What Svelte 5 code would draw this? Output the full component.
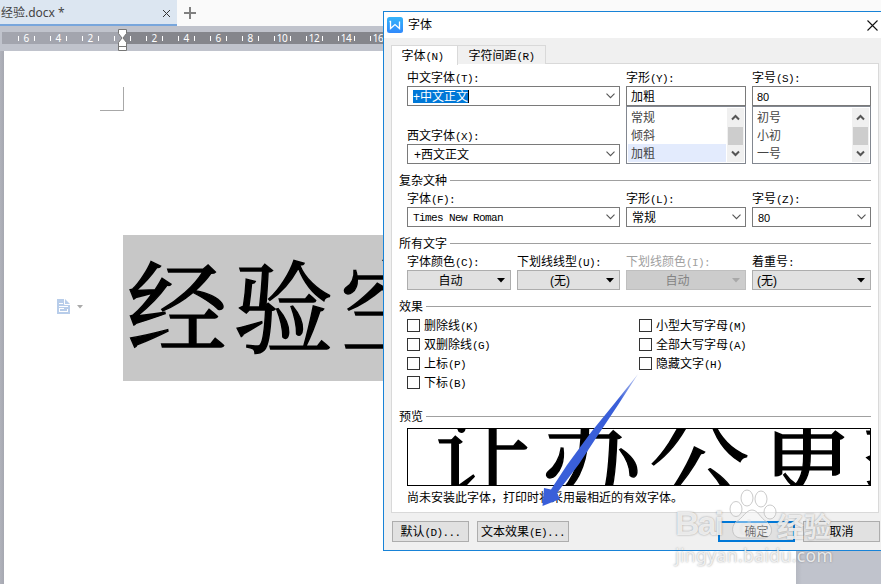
<script lang="ts">
    const rulerMarks = ["6", "4", "2", "", "2", "4", "6", "8", "10", "12", "14", "16"];
    const fontStyles = ["常规", "倾斜", "加粗"];
    const fontSizes = ["初号", "小初", "一号"];
    const leftEffects = [
        { text: "删除线", key: "(K)" },
        { text: "双删除线", key: "(G)" },
        { text: "上标", key: "(P)" },
        { text: "下标", key: "(B)" },
    ];
    const rightEffects = [
        { text: "小型大写字母", key: "(M)" },
        { text: "全部大写字母", key: "(A)" },
        { text: "隐藏文字", key: "(H)" },
    ];

    let selectedStyle = $state("加粗");
    let activeTab = $state("font");
</script>

{#snippet label(text: string, key: string)}
    <div class="label">{text}<span class="key">{key}</span></div>
{/snippet}

{#snippet chevron()}
    <svg class="chevron" width="9" height="6" viewBox="0 0 9 6">
        <path d="M0.5 0.7L4.5 4.7L8.5 0.7" fill="none" stroke="#555" stroke-width="1.1" />
    </svg>
{/snippet}

{#snippet heading(text: string)}
    <div class="heading"><span>{text}</span><i></i></div>
{/snippet}

{#snippet triangle()}
    <svg class="triangle" width="8" height="5" viewBox="0 0 8 5">
        <path d="M0 0H8L4 4.5Z" fill="currentColor" />
    </svg>
{/snippet}

{#snippet listbox(items: string[], current: string)}
    <div class="listbox">
        <div class="items">
            {#each items as item}
                <div class="item" class:selected={item === current}>{item}</div>
            {/each}
        </div>
        <div class="scrollbar">
            <svg width="9" height="7" viewBox="0 0 9 7">
                <path d="M1 5.5L4.5 2L8 5.5" fill="none" stroke="#555" stroke-width="2" />
            </svg>
            <div class="thumb"></div>
            <svg width="9" height="7" viewBox="0 0 9 7">
                <path d="M1 1.5L4.5 5L8 1.5" fill="none" stroke="#555" stroke-width="2" />
            </svg>
        </div>
    </div>
{/snippet}

{#snippet checkbox(text: string, key: string)}
    <div class="check"><span class="box"></span><span class="caption">{text}<span class="key">{key}</span></span></div>
{/snippet}

<div class="app">
    <div class="tabbar">
        <div class="doc-tab">
            <span>经验.docx *</span>
            <svg width="9" height="9" viewBox="0 0 9 9">
                <path d="M1 1L8 8M8 1L1 8" stroke="#333" stroke-width="1" />
            </svg>
        </div>
        <svg class="plus" width="12" height="12" viewBox="0 0 12 12">
            <path d="M6 0V12M0 6H12" stroke="#808080" stroke-width="2" />
        </svg>
    </div>
    <div class="ruler">
        <div class="scale">
            {#each rulerMarks as mark}
                <div class="mark"><i></i><span>{mark}</span><i></i></div>
            {/each}
        </div>
        <svg class="indent" width="9" height="22" viewBox="0 0 9 22">
            <path d="M0.5 0.5H8.5V4.5L5 9L8.5 13.5V21.5H0.5V13.5L4 9L0.5 4.5Z" fill="#fff" stroke="#777" />
            <path d="M0.5 17.5H8.5" stroke="#777" />
        </svg>
    </div>
    <div class="workspace">
        <div class="page">
            <div class="corner"></div>
            <div class="line">
                <div class="paste">
                    <svg width="13" height="15" viewBox="0 0 13 15">
                        <path d="M0 0H8L13 5V15H0Z" fill="#b8cdea" />
                        <path d="M7.5 0V5.5H13M2 4.5H6M2 7.5H11M2 9.5H7M2 12.5H11M10.5 10V13M2.5 10V13" fill="none" stroke="#fff" />
                    </svg>
                    <svg width="6" height="4" viewBox="0 0 6 4">
                        <path d="M0 0H6L3 3.5Z" fill="#aaa" />
                    </svg>
                </div>
                <div class="selection">经验空</div>
            </div>
        </div>
    </div>

    <div class="dialog">
        <div class="title">
            <svg width="16" height="16" viewBox="0 0 16 16">
                <defs>
                    <linearGradient id="logo" x1="0" y1="0" x2="0" y2="1">
                        <stop offset="0" stop-color="#35b4fa" />
                        <stop offset="1" stop-color="#3089fc" />
                    </linearGradient>
                </defs>
                <rect width="16" height="16" rx="2.5" fill="url(#logo)" />
                <path d="M2.5 4.5H3.5V11.5L8 7.5L12.5 11.5V4.5" fill="none" stroke="#fff" stroke-width="1.3" />
            </svg>
            <span>字体</span>
            <svg class="close" width="11" height="11" viewBox="0 0 11 11">
                <path d="M0.5 0.5L10.5 10.5M10.5 0.5L0.5 10.5" stroke="#111" stroke-width="1.1" />
            </svg>
        </div>

        <div class="tabs">
            <button class="tab" class:active={activeTab === "font"} onclick={() => (activeTab = "font")}>
                字体<span class="key">(N)</span>
            </button>
            <button class="tab" class:active={activeTab === "spacing"} onclick={() => (activeTab = "spacing")}>
                字符间距<span class="key">(R)</span>
            </button>
        </div>

        <div class="panel">
            <div class="fields top">
                <div class="stack">
                    <div>
                        {@render label("中文字体", "(T):")}
                        <div class="combo"><span class="marked">+中文正文</span>{@render chevron()}</div>
                    </div>
                    <div>
                        {@render label("西文字体", "(X):")}
                        <div class="combo"><span class="plain">+西文正文</span>{@render chevron()}</div>
                    </div>
                </div>
                <div>
                    {@render label("字形", "(Y):")}
                    <div class="combo input"><span>加粗</span></div>
                    {@render listbox(fontStyles, selectedStyle)}
                </div>
                <div>
                    {@render label("字号", "(S):")}
                    <div class="combo input"><span class="num">80</span></div>
                    {@render listbox(fontSizes, "")}
                </div>
            </div>

            {@render heading("复杂文种")}
            <div class="fields">
                <div>
                    {@render label("字体", "(F):")}
                    <div class="combo"><span class="roman">Times New Roman</span>{@render chevron()}</div>
                </div>
                <div>
                    {@render label("字形", "(L):")}
                    <div class="combo"><span>常规</span>{@render chevron()}</div>
                </div>
                <div>
                    {@render label("字号", "(Z):")}
                    <div class="combo"><span class="num">80</span>{@render chevron()}</div>
                </div>
            </div>

            {@render heading("所有文字")}
            <div class="fields four">
                <div>
                    {@render label("字体颜色", "(C):")}
                    <button class="drop"><span>自动</span>{@render triangle()}</button>
                </div>
                <div>
                    {@render label("下划线线型", "(U):")}
                    <button class="drop"><span>(无)</span>{@render triangle()}</button>
                </div>
                <div class="disabled">
                    {@render label("下划线颜色", "(I):")}
                    <button class="drop" disabled><span>自动</span>{@render triangle()}</button>
                </div>
                <div>
                    {@render label("着重号", ":")}
                    <button class="drop start"><span>(无)</span>{@render triangle()}</button>
                </div>
            </div>

            {@render heading("效果")}
            <div class="effects">
                <div>
                    {#each leftEffects as effect}
                        {@render checkbox(effect.text, effect.key)}
                    {/each}
                </div>
                <div>
                    {#each rightEffects as effect}
                        {@render checkbox(effect.text, effect.key)}
                    {/each}
                </div>
            </div>

            {@render heading("预览")}
            <div class="preview"><span>让办公更轻</span></div>
            <div class="note">尚未安装此字体，打印时将采用最相近的有效字体。</div>
        </div>

        <div class="footer">
            <button class="btn">默认<span class="key">(D)...</span></button>
            <button class="btn effect">文本效果<span class="key">(E)...</span></button>
            <button class="btn ok">确定</button>
            <button class="btn">取消</button>
        </div>
    </div>

    <svg class="arrow" width="100" height="136" viewBox="540 372 100 136">
        <defs>
            <linearGradient id="shaft" x1="0" y1="1" x2="1" y2="0">
                <stop offset="0.8" stop-color="#3a5fd9" />
                <stop offset="1" stop-color="#3a5fd9" stop-opacity="0.3" />
            </linearGradient>
        </defs>
        <path d="M542.5 506L544 488L551 489.5L567 465L592 431L614 404L638 374L618 405L598 435L579 464L557 493L560 499Z" fill="url(#shaft)" />
    </svg>

    <div class="watermark">
        <div class="brand">
            <span class="bai">Bai</span>
            <svg width="50" height="54" viewBox="0 0 50 54">
                <g fill="#fff" fill-opacity="0.4" stroke="#bdbdbd" stroke-opacity="0.8">
                    <ellipse cx="9" cy="21" rx="6" ry="7.5" />
                    <ellipse cx="20" cy="10" rx="6" ry="8" />
                    <ellipse cx="34" cy="11" rx="6" ry="8" />
                    <ellipse cx="43" cy="24" rx="6" ry="7" />
                    <path d="M25 22C19 22 16 30 9 34C3 39 5 50 14 50H36C46 50 47 39 40 34C33 30 31 22 25 22Z" />
                </g>
                <text x="25" y="47" text-anchor="middle">du</text>
            </svg>
            <span class="jy">经验</span>
        </div>
        <div class="url">jingyan.baidu.com</div>
    </div>
</div>

<style>
    :global(body) {
        margin: 0;
    }

    .app {
        position: relative;
        width: 881px;
        height: 584px;
        overflow: hidden;
        display: flex;
        flex-direction: column;
        background: #c0c3cc;
        font: 12px/16px "Liberation Sans", "Noto Sans CJK SC", sans-serif;
        color: #000;
    }

    .app *,
    .app {
        box-sizing: border-box;
    }

    svg {
        display: block;
        flex: none;
    }

    button {
        font: inherit;
        color: inherit;
        padding: 0;
        margin: 0;
        border-radius: 0;
    }

    /* half the width of a 12px ideograph per letter */
    .key {
        font-family: "Liberation Mono", monospace;
        font-size: 11px;
        line-height: 12px;
        letter-spacing: -0.6px;
    }

    /* document window */
    .tabbar {
        height: 26px;
        display: flex;
        align-items: center;
        background: #fafafa;
    }

    .doc-tab {
        width: 177px;
        height: 26px;
        padding: 2px 6px 0 1px;
        display: flex;
        align-items: center;
        justify-content: space-between;
        background: #dce6f1;
        border-bottom: 2px solid #78a6dc;
        font-family: "Noto Sans", "Noto Sans CJK SC", sans-serif;
        color: #444;
    }

    .plus {
        margin-left: 7px;
    }

    .ruler {
        position: relative;
        height: 25px;
        padding: 6px 0 0 2px;
    }

    .scale {
        height: 12px;
        padding-left: 8px;
        display: flex;
        background: linear-gradient(to right, #a3a5ae 121px, #85868c 121px);
    }

    .mark {
        width: 32px;
        flex: none;
        display: flex;
        align-items: center;
        justify-content: center;
        font: 10px/12px "Noto Sans", sans-serif;
        letter-spacing: -0.5px;
        color: #fff;
    }

    .mark i {
        width: 1px;
        height: 5px;
        background: #fff;
    }

    .mark span {
        width: 15px;
        display: flex;
        justify-content: center;
    }

    .indent {
        position: absolute;
        left: 118px;
        top: 3px;
    }

    .workspace {
        flex: 1;
        padding-left: 4px;
        background: linear-gradient(to right, #b0b2bb, #a6a8b1 4px, #b5b8c1 796px, #c0c3cc 802px);
    }

    .page {
        width: 792px;
        height: 533px;
        padding-top: 36px;
        background: #fff;
    }

    .corner {
        width: 24px;
        height: 24px;
        margin-left: 96px;
        border: solid #a8a8a8;
        border-width: 0 1px 1px 0;
    }

    .line {
        display: flex;
        align-items: center;
        margin-top: 124px;
        padding-left: 53px;
    }

    .paste {
        width: 66px;
        padding-bottom: 3px;
        display: flex;
        align-items: center;
        gap: 7px;
    }

    .selection {
        height: 146px;
        width: 330px;
        padding-left: 4px;
        overflow: hidden;
        background: #c7c7c7;
        font: 100px/134px "Noto Serif CJK SC", "Noto Sans CJK SC", serif;
        letter-spacing: 6.6px;
        -webkit-text-stroke: 1.4px #000;
        white-space: nowrap;
    }

    /* font dialog */
    .dialog {
        position: absolute;
        left: 383px;
        top: 11px;
        width: 498px;
        height: 540px;
        border: solid #1883d7;
        border-width: 1px 0 1px 1px;
        background: #f0f0f0;
    }

    .title {
        height: 26px;
        padding: 0 3px;
        display: flex;
        align-items: center;
        gap: 5px;
        background: #fff;
    }

    .close {
        margin-left: auto;
    }

    .tabs {
        height: 26px;
        padding-left: 7px;
        display: flex;
        align-items: flex-end;
    }

    .tab {
        width: 88px;
        height: 19px;
        padding-top: 1px;
        border: 1px solid #d9d9d9;
        border-left: none;
        border-bottom: none;
        background: #f0f0f0;
    }

    .tab.active {
        width: 67px;
        height: 20px;
        margin-bottom: -1px;
        padding: 0 4px 0 0;
        border-left: 1px solid #d9d9d9;
        background: #fff;
        z-index: 1;
    }

    .panel {
        width: 488px;
        height: 450px;
        margin: -1px 0 0 7px;
        padding: 5px 7px;
        border: 1px solid #d9d9d9;
        background: #fff;
    }

    .fields {
        margin: 2px 0 0 8px;
        display: grid;
        grid-template-columns: 213px 120px 119px;
        column-gap: 6px;
    }

    .fields.top {
        margin-top: 0;
    }

    .fields.four {
        grid-template-columns: 104px 103px 120px 119px;
    }

    .stack {
        display: flex;
        flex-direction: column;
        gap: 21px;
    }

    .label {
        height: 17px;
        line-height: 18px;
        white-space: nowrap;
    }

    .combo {
        height: 20px;
        padding: 0 4px 0 5px;
        display: flex;
        align-items: center;
        justify-content: space-between;
        border: 1px solid #7a7a7a;
        background: #fff;
    }

    .combo span {
        padding-top: 1px;
    }

    .combo.input {
        padding-left: 4px;
    }

    .combo .marked {
        height: 13px;
        padding: 0;
        line-height: 14px;
        border-right: 1px solid #000;
        background: #0078d7;
        color: #fff;
    }

    .plain {
        padding-left: 1px;
    }

    .num {
        font-size: 11px;
    }

    .roman {
        font: 11px/16px "Liberation Mono", monospace;
        letter-spacing: -0.6px;
    }

    .listbox {
        height: 58px;
        padding: 1px;
        display: flex;
        border: 1px solid #828790;
        color: #444;
    }

    .items {
        flex: 1;
    }

    .item {
        height: 18px;
        padding-left: 3px;
        line-height: 20px;
    }

    .item.selected {
        background: #e3ebfd;
    }

    .scrollbar {
        width: 17px;
        margin-left: 1px;
        display: flex;
        flex-direction: column;
        align-items: center;
        justify-content: space-between;
        padding: 6px 0 5px;
        background: #f0f0f0;
    }

    .thumb {
        width: 15px;
        height: 18px;
        background: #cdcdcd;
    }

    .heading {
        height: 16px;
        margin-top: 8px;
        display: flex;
        align-items: center;
        gap: 3px;
    }

    .heading span {
        padding-top: 1px;
    }

    .heading i {
        flex: 1;
        height: 1px;
        background: #a0a0a0;
    }

    .drop {
        width: 100%;
        height: 20px;
        padding: 0 5px 0 0;
        display: flex;
        align-items: center;
        border: 1px solid #adadad;
        background: #e1e1e1;
    }

    .drop span {
        flex: 1;
        padding: 1px 4px 0 0;
        line-height: 16px;
    }

    .drop.start {
        padding-left: 4px;
        text-align: left;
    }

    .disabled {
        color: #a0a0a0;
    }

    .disabled .drop {
        background: #ccc;
        border-color: #bfbfbf;
        color: #838383;
    }

    .disabled .triangle {
        color: #a8a8a8;
    }

    .effects {
        height: 76px;
        margin: 2px 0 16px 8px;
        display: grid;
        grid-template-columns: 232px 1fr;
    }

    .check {
        height: 19px;
        display: flex;
        align-items: center;
    }

    .caption {
        padding-top: 1px;
    }

    .box {
        width: 13px;
        height: 13px;
        margin-right: 4px;
        border: 1px solid #333;
        background: #fff;
    }

    .preview {
        width: 464px;
        height: 58px;
        margin: 4px 0 4px 8px;
        padding: 0 0 7px 26px;
        display: flex;
        align-items: center;
        overflow: hidden;
        border: 1px solid #000;
        font: 100px/100px "Noto Serif CJK SC", "Noto Sans CJK SC", serif;
        letter-spacing: 7.5px;
        -webkit-text-stroke: 1.4px #000;
        white-space: nowrap;
    }

    .note {
        margin-left: 8px;
        line-height: 17px;
        white-space: nowrap;
    }

    .footer {
        margin-top: 8px;
        padding-left: 8px;
        display: flex;
        gap: 8px;
    }

    .btn {
        width: 77px;
        height: 21px;
        line-height: 16px;
        border: 1px solid #adadad;
        background: #e1e1e1;
        white-space: nowrap;
    }

    .btn.effect {
        width: 92px;
    }

    .btn.ok {
        margin-left: 141px;
        border: 2px solid #0078d7;
    }

    .arrow {
        position: absolute;
        left: 540px;
        top: 372px;
    }

    .watermark {
        position: absolute;
        left: 675px;
        top: 488px;
        color: rgba(248, 248, 248, 0.85);
        text-shadow: 0 0 2px rgba(90, 90, 90, 0.6);
    }

    .brand {
        height: 54px;
        display: flex;
        align-items: flex-end;
    }

    .bai {
        width: 52px;
        font: bold 34px/37px "Liberation Sans", sans-serif;
        letter-spacing: -2px;
    }

    .brand text {
        font: bold 22px "Liberation Sans", sans-serif;
        fill: rgba(225, 225, 225, 0.35);
        text-shadow: none;
    }

    .jy {
        font: bold 27px/32px "Noto Sans CJK SC", sans-serif;
    }

    .url {
        margin-top: 1px;
        font: 17.5px/24px "Noto Sans", sans-serif;
        letter-spacing: 0.4px;
    }
</style>
